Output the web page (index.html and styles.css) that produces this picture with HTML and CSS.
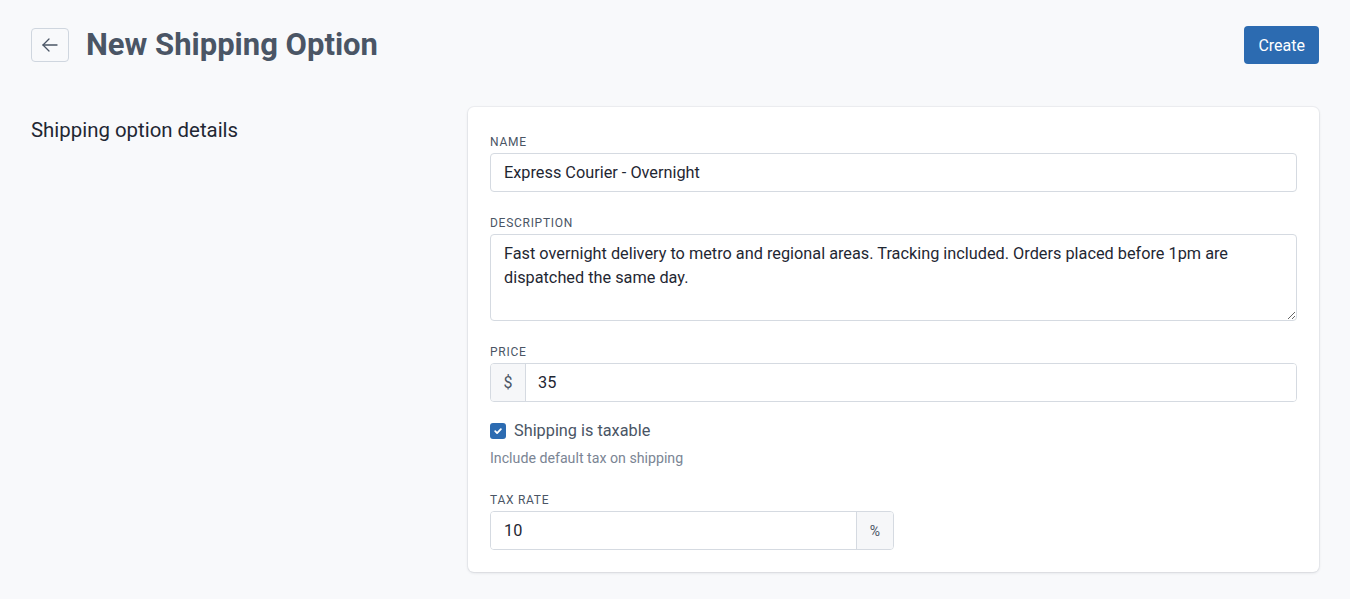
FILE: index.html
```html
<!DOCTYPE html>
<html lang="en">
<head>
  <meta charset="UTF-8">
  <meta name="viewport" content="width=device-width, initial-scale=1.0">
  <title>New Shipping Option</title>
  <link rel="stylesheet" href="styles.css">
</head>
<body>

  <header class="page-header">
    <div class="page-header__title">
      <button class="back-button" aria-label="Back">
        <svg width="18" height="18" viewBox="0 0 18 18" fill="none" stroke="currentColor" stroke-width="1.3" stroke-linecap="round" stroke-linejoin="round">
          <path d="M16 9H2"/>
          <path d="M8 3L2 9l6 6"/>
        </svg>
      </button>
      <h1>New Shipping Option</h1>
    </div>
    <button class="button button--primary">Create</button>
  </header>

  <section class="layout">
    <h2 class="layout__heading">Shipping option details</h2>

    <form class="card" action="">
      <div class="field">
        <label class="field__label" for="name">Name</label>
        <input class="input" id="name" type="text" value="Express Courier - Overnight">
      </div>

      <div class="field">
        <label class="field__label" for="description">Description</label>
        <textarea class="input input--textarea" id="description">Fast overnight delivery to metro and regional areas. Tracking included. Orders placed before 1pm are dispatched the same day.</textarea>
      </div>

      <div class="field">
        <label class="field__label" for="price">Price</label>
        <div class="input-group">
          <span class="input-group__addon">$</span>
          <input class="input-group__input" id="price" type="text" value="35">
        </div>
      </div>

      <label class="checkbox">
        <span class="checkbox__box">
          <svg width="10" height="10" viewBox="0 0 10 10" fill="none" stroke="#fff" stroke-width="1.8" stroke-linecap="round" stroke-linejoin="round">
            <path d="M2.2 5.2l1.9 1.9 3.8-4"/>
          </svg>
        </span>
        Shipping is taxable
      </label>
      <p class="help-text">Include default tax on shipping</p>

      <div class="field field--last">
        <label class="field__label" for="tax">Tax rate</label>
        <div class="input-group input-group--half">
          <input class="input-group__input" id="tax" type="text" value="10">
          <span class="input-group__addon input-group__addon--right">%</span>
        </div>
      </div>
    </form>
  </section>

</body>
</html>
```

FILE: styles.css
```css
* {
  box-sizing: border-box;
  margin: 0;
  padding: 0;
}

:root {
  --page-bg: #f8f9fb;
  --text: #1f2733;
  --text-muted: #4a5565;
  --text-light: #7b8594;
  --border: #d5dae1;
  --addon-bg: #f6f7f9;
  --primary: #2c6bb1;
}

body {
  background: var(--page-bg);
  color: var(--text);
  font-family: Roboto, "Liberation Sans", sans-serif;
  padding: 26px 31px;
}

button {
  font-family: inherit;
  cursor: pointer;
}

/* Header */

.page-header {
  display: flex;
  align-items: center;
  justify-content: space-between;
}
.page-header__title {
  display: flex;
  align-items: center;
  gap: 17px;
}
.page-header h1 {
  font-size: 31px;
  font-weight: 700;
  color: var(--text-muted);
  line-height: 38px;
}
.back-button {
  width: 38px;
  height: 34px;
  display: flex;
  align-items: center;
  justify-content: center;
  border: 1px solid #cfd6df;
  border-radius: 4px;
  background: var(--page-bg);
  color: var(--text-muted);
}
.button {
  height: 38px;
  padding: 0 13px;
  border-radius: 4px;
  border: 1px solid transparent;
  font-size: 16px;
}
.button--primary {
  background: var(--primary);
  color: #fff;
}

/* Layout */

.layout {
  display: grid;
  grid-template-columns: 413px 1fr;
  gap: 24px;
  margin-top: 43px;
}
.layout__heading {
  font-size: 20.4px;
  font-weight: 400;
  color: var(--text);
  line-height: 24px;
  margin-top: 11px;
}

.card {
  background: #fff;
  border-radius: 6px;
  box-shadow: 0 0 0 1px rgba(20, 30, 50, 0.04), 0 1px 3px rgba(20, 30, 50, 0.12);
  padding: 27px 22px 22px;
}

/* Fields */

.field {
  margin-bottom: 23px;
}
.field--last {
  margin-bottom: 0;
}
.field__label {
  display: block;
  font-size: 12px;
  line-height: 16px;
  letter-spacing: 0.06em;
  text-transform: uppercase;
  color: var(--text-muted);
  margin-bottom: 3px;
}
.input {
  display: block;
  width: 100%;
  height: 39px;
  padding: 0 13px;
  border: 1px solid var(--border);
  border-radius: 4px;
  font-family: inherit;
  font-size: 16.3px;
  color: var(--text);
  background: #fff;
}
.input--textarea {
  height: 87px;
  padding: 7px 13px;
  line-height: 24px;
  resize: vertical;
}

.input-group {
  display: flex;
  height: 39px;
  border: 1px solid var(--border);
  border-radius: 4px;
  overflow: hidden;
}
.input-group--half {
  width: 404px;
}
.input-group__addon {
  display: flex;
  align-items: center;
  justify-content: center;
  width: 35px;
  background: var(--addon-bg);
  border-right: 1px solid var(--border);
  color: var(--text-muted);
  font-size: 16px;
}
.input-group__addon--right {
  width: 37px;
  border-right: 0;
  border-left: 1px solid var(--border);
  font-size: 14px;
}
.input-group__input {
  flex: 1;
  min-width: 0;
  border: 0;
  padding: 0 12px;
  font-family: inherit;
  font-size: 16.3px;
  color: var(--text);
}
.input-group--half .input-group__input {
  padding: 0 13px;
}

/* Checkbox */

.checkbox {
  display: flex;
  align-items: center;
  gap: 8px;
  font-size: 16.3px;
  line-height: 20px;
  color: var(--text-muted);
  margin-top: -4px;
}
.checkbox__box {
  width: 16px;
  height: 16px;
  border-radius: 3px;
  background: var(--primary);
  display: flex;
  align-items: center;
  justify-content: center;
}
.help-text {
  font-size: 14.2px;
  line-height: 20px;
  color: var(--text-light);
  margin-top: 7px;
  margin-bottom: 24px;
}
```
